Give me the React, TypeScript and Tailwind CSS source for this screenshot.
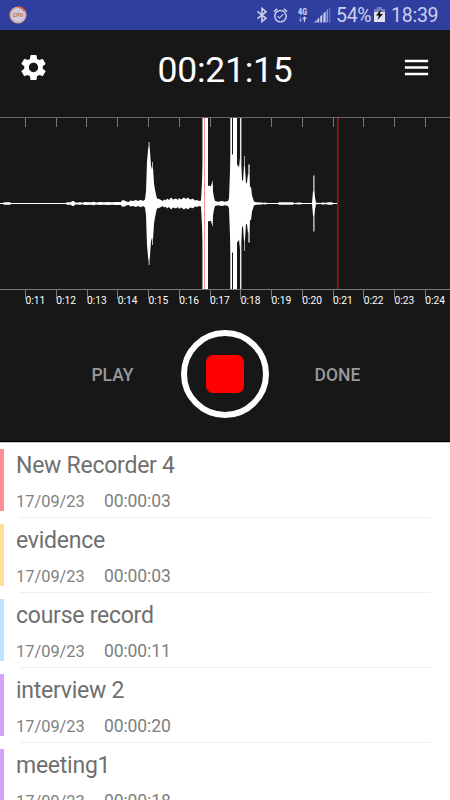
import React from "react";
import { MdSettings, MdMenu, MdAlarmOn } from "react-icons/md";

const CENTER = 86.5;
const TICKS = [25, 56, 86, 117, 148, 179, 210, 240, 271, 302, 333, 363, 394, 425];

// Half-height envelope of the recorded signal: [x, amplitude]
const ENVELOPE: [number, number][] = [
  [0, 0.6], [3, 0.6], [4, 1.2], [10, 1.2], [11, 0.6], [66, 0.6], [67, 1.2], [71, 1.2], [72, 2.4], [74, 2.4],
  [75, 1], [79, 1], [80, 1.5], [82, 0.8], [85, 1.4], [91, 1.2], [94, 1.8], [96, 1], [100, 1.6], [104, 1.2],
  [108, 1.6], [112, 1.2], [116, 1.6], [121, 1.5], [122, 3.2], [125, 3], [126, 2], [129, 1.6], [130, 3],
  [133, 2.5], [136, 3.5], [138, 2.6], [141, 3.8], [143, 2.6], [145, 4], [146, 12], [147, 42],
  [148, 53], [149, 58], [150, 52], [151, 38], [152, 34], [153, 36], [154, 20], [155, 14],
  [156, 9], [157, 5], [159, 4.5], [161, 3.5], [163, 2.5], [164, 4], [166, 3.2], [167, 5], [169, 3.5],
  [171, 6], [173, 4], [176, 5], [178, 3.5], [179, 5.5], [181, 4], [184, 6], [186, 4.5], [188, 6],
  [190, 4], [193, 4.8], [195, 3], [197, 3.5], [199, 2.5], [201, 3], [202, 22], [203, 40], [207, 35],
  [208, 17], [209, 18], [211, 17], [211.5, 20], [212.5, 20], [213, 12], [214, 6], [215, 2.5], [218, 1.8],
  [222, 2.5], [225, 1.8], [228, 2.5], [229, 5], [230, 32], [231, 50], [234, 48], [236, 40], [238, 38],
  [239, 36], [240, 46], [241, 38], [242, 24], [243, 22], [244, 38], [245, 36], [246, 20], [247, 21],
  [248, 30], [249, 28], [250, 16], [251, 17], [252, 8], [253, 5], [254, 2], [256, 1.2], [262, 1],
  [263, 0.6], [264, 1.1], [268, 0.6], [278, 0.6], [279, 1.3], [293, 1.2], [294, 0.6], [299, 1],
  [303, 0.6], [312, 0.6], [313, 12], [314, 12.5], [315, 6], [316, 0.7], [321, 0.6], [322, 1], [326, 0.7],
  [329, 1.3], [332, 1.2], [333, 0.6], [338, 0.6],
];

// Thin peaks: [x, width, amplitude, colour]
const PEAKS: [number, number, number, string][] = [
  [148.5, 1.2, 62, "#b6b6b6"],
  [152, 1, 42, "#b8b8b8"],
  [202, 1, 86, "#999999"],
  [203, 5, 86, "#ffffff"],
  [208, 3, 18, "#bdbdbd"],
  [212, 1, 23, "#aaaaaa"],
  [230, 1, 86, "#b5b5b5"],
  [231, 1, 86, "#ffffff"],
  [233, 4, 86, "#ffffff"],
  [240, 1.4, 86, "#e8e8e8"],
  [244, 1, 48, "#a8a8a8"],
  [248, 2, 39.5, "#a8a8a8"],
  [313, 1.7, 28.5, "#aaa5a5"],
];

const points = [
  ...ENVELOPE.map(([x, a]) => `${x},${CENTER - a}`),
  ...[...ENVELOPE].reverse().map(([x, a]) => `${x},${CENTER + a}`),
].join(" ");

const RECORDINGS = [
  { name: "New Recorder 4", length: "00:00:03", color: "bg-[#ff9096]" },
  { name: "evidence", length: "00:00:03", color: "bg-[#ffe196]" },
  { name: "course record", length: "00:00:11", color: "bg-[#bde2ff]" },
  { name: "interview 2", length: "00:00:20", color: "bg-[#d6a1f8]" },
  { name: "meeting1", length: "00:00:18", color: "bg-[#d6a1f8]" },
];

function StatusBar() {
  return (
    <div className="flex h-[30px] items-center bg-[#303f9f] pr-3 pl-[9px] text-[#cbcfeb]">
      <svg width="18" height="18" viewBox="0 0 18 18">
        <circle cx="9" cy="9" r="7.8" fill="#cdcbe3" stroke="#d5a48c" strokeWidth="1.5" />
        <path d="M9 1.2A7.8 7.8 0 0 1 15.5 5" fill="none" stroke="#df5d2c" strokeWidth="1.7" />
        <text x="9" y="11" textAnchor="middle" fontFamily="Roboto, sans-serif" fontSize="5.4" fontWeight="700" fill="#cf6a48">CPU</text>
      </svg>
      <div className="ml-auto flex items-center">
        <svg width="12" height="16" viewBox="0 0 12 16" fill="none" stroke="currentColor" strokeWidth="1.6">
          <path d="M1.5 4.3L10 11.3L6 14.6V1.4L10 4.7L1.5 11.7" />
        </svg>
        <MdAlarmOn size={17} className="ml-[4px]" />
        <svg className="ml-[8px]" width="11" height="18" viewBox="0 0 11 18">
          <text x="5.5" y="9" textAnchor="middle" fontFamily="Roboto, sans-serif" fontSize="9" fontWeight="900" fill="#cbcfeb" textLength="9" lengthAdjust="spacingAndGlyphs">4G</text>
          <path d="M3.5 11v4M2 13.5l1.5 2 1.5-2" fill="none" stroke="#8f97d0" />
          <path d="M7.5 16v-4M5.8 13.2l1.7-2 1.7 2" fill="none" stroke="#cbcfeb" strokeWidth="1.2" />
        </svg>
        <svg className="ml-[6px]" width="18" height="18" viewBox="0 0 18 18">
          <path d="M0 16.5h2.5v-2.5zM3.2 16.5h2v-5l-2 2zM6.2 16.5h2V8.5l-2 2zM9.4 16.5h2.2V5.5l-2.2 2z" fill="#cbcfeb" />
          <path d="M12.4 16.5h1.6V3l-1.6 1.6z" fill="#8e96ce" />
          <path d="M14.8 16.5h1.6V1l-1.6 1.6z" fill="#656fb8" />
        </svg>
        <span className="ml-[4px] w-[35px] pt-[1px] text-[19.5px] leading-[29px] tracking-[-0.3px] whitespace-nowrap">54%</span>
        <svg className="ml-[3px]" width="11" height="18" viewBox="0 0 11 18">
          <path d="M3 1h5v2h3v4H0V3h3z" fill="#7780c2" />
          <path d="M0 6h11v10H0z" fill="#dfe1f3" />
          <path d="M7 3.5L2 9.5h3L3.5 14 9 8H6z" fill="#080808" />
        </svg>
        <span className="ml-[6px] w-[47px] pt-[1px] text-[19.5px] leading-[29px] tracking-[-0.25px]">18:39</span>
      </div>
    </div>
  );
}

function Waveform() {
  return (
    <div className="h-[201px]">
      <svg className="block" width="450" height="173" viewBox="0 0 450 173">
        <g shapeRendering="crispEdges">
          <rect x="0" y="0" width="450" height="1" fill="#676767" />
          <rect x="0" y="172" width="450" height="1" fill="#777777" />
          {TICKS.map((x) => (
            <rect key={x} x={x} y="1" width="1" height="9" fill="#777777" />
          ))}
        </g>
        {PEAKS.map(([x, w, a, fill]) => (
          <rect key={x} x={x} y={CENTER - a + 0.5} width={w} height={a * 2 - 1} fill={fill} />
        ))}
        <polygon points={points} fill="#ffffff" />
        <rect x="204" y="1" width="1" height="171" fill="#ff9294" />
        <rect x="337" y="1" width="1" height="171" fill="#dd0005" />
        <rect x="338" y="1" width="1" height="171" fill="#6b1212" />
      </svg>
      <div className="flex pl-[25px]">
        {TICKS.map((x, i) => (
          <div key={x} className="h-[9px] w-[30.75px] shrink-0 border-l border-[#777777] pt-[4px] text-[10.2px] leading-[14px] text-white">
            <span className="-ml-[0.5px]">0:{11 + i}</span>
          </div>
        ))}
      </div>
    </div>
  );
}

export default function App() {
  return (
    <div className="h-[800px] w-[450px] overflow-hidden bg-white font-['Roboto',sans-serif]">
      <StatusBar />
      <div className="h-[412px] overflow-hidden border-b border-black bg-[#171717]">
        <header className="flex h-[87px] items-center justify-between pr-[18px] pb-[12px] pl-[18px] text-white">
          <MdSettings size={31} />
          <h1 className="pt-[4px] text-[35.5px] leading-10 tracking-[-0.25px]">00:21:15</h1>
          <MdMenu size={31} />
        </header>
        <Waveform />
        <div className="flex h-[112px] items-center text-[17.5px] font-medium text-[#999999]">
          <button className="w-[181px] pt-[2px] pl-[44px] text-center">PLAY</button>
          <div className="flex size-[88px] items-center justify-center rounded-full border-[6.5px] border-white">
            <div className="size-[38px] rounded-[7px] bg-[#ff0000]" />
          </div>
          <button className="w-[181px] pt-[2px] pr-[44px] text-center">DONE</button>
        </div>
      </div>
      <div className="border-t border-[#c4c4c4] pt-[6px]">
        {RECORDINGS.map((r) => (
          <div key={r.name} className="flex h-[75px] items-start">
            <div className={`h-[62px] w-1 shrink-0 ${r.color}`} />
            <div className="ml-[12px] w-[415px] text-[#6f6f6f]">
              <div className="h-[34px] text-[23px] leading-[33px] tracking-[-0.25px]">{r.name}</div>
              <div className="flex h-[34px] items-baseline leading-[36px] text-[#7f7f7f]">
                <span className="w-[88px] text-[16.4px]">17/09/23</span>
                <span className="text-[17.5px] tracking-[-0.1px]">{r.length}</span>
              </div>
              <div className="ml-[3px] h-px bg-[#efefef]" />
            </div>
          </div>
        ))}
      </div>
    </div>
  );
}
